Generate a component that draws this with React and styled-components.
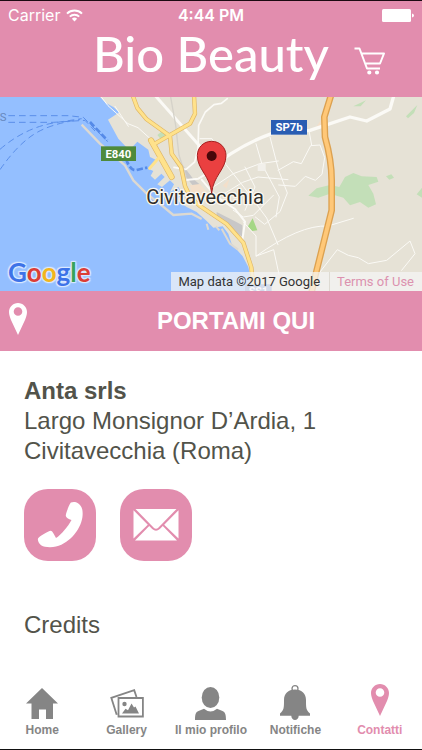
import React from "react";
import styled, { createGlobalStyle } from "styled-components";

const PINK = "#e28dae";
const GREY = "#858585";
const INK = "#52534a";

const GlobalStyle = createGlobalStyle`
  *, *::before, *::after { box-sizing: border-box; }
  body {
    margin: 0;
    background: #fff;
    color: ${INK};
    font-family: "Liberation Sans", Arial, sans-serif;
  }
`;

const Screen = styled.div`
  display: flex;
  flex-direction: column;
  min-height: 100vh;
  border-top: 1px solid #1c0a12;
  border-bottom: 1px solid #111;
`;

const Header = styled.header`
  background: ${PINK};
  color: #fff;
`;

const StatusBar = styled.div`
  display: grid;
  grid-template-columns: 1fr auto 1fr;
  align-items: center;
  height: 28px;
  padding: 0 8px;
  font-family: Inter, sans-serif;
  font-size: 16px;
`;

const Carrier = styled.span`
  display: flex;
  align-items: center;
  gap: 6px;
`;

const Clock = styled.time`
  font-weight: 600;
`;

const BatterySlot = styled.span`
  display: flex;
  justify-content: flex-end;
`;

const TitleRow = styled.div`
  display: grid;
  grid-template-columns: 1fr auto 1fr;
  align-items: center;
  height: 68px;
  padding-bottom: 20px;
`;

const Title = styled.h1`
  grid-column: 2;
  margin: 0;
  font-family: Lato, sans-serif;
  font-size: 49px;
  font-weight: 500;
  line-height: 48px;
  white-space: nowrap;
`;

const CartButton = styled.button`
  justify-self: end;
  display: flex;
  margin: 16px 36px 0 0;
  padding: 0;
  border: 0;
  background: none;
  color: inherit;
`;

const MapArea = styled.section`
  position: relative;
  height: 194px;
  background: #e6e2d6;
  overflow: hidden;
`;

const MapDrawing = styled.svg`
  display: block;
  width: 100%;
  height: 100%;
`;

const GoogleMark = styled.a`
  position: absolute;
  left: 8px;
  bottom: 3px;
  font-family: Lato, sans-serif;
  font-size: 26px;
  font-weight: 700;
  line-height: 32px;
  text-decoration: none;
  text-shadow: 0 0 2px #dbe9ff, 1px 1px 1px #dbe9ff, -1px -1px 1px #dbe9ff, 1px -1px 1px #dbe9ff, -1px 1px 1px #dbe9ff;
`;

const GoogleLetter = styled.span`
  color: ${(p) => p.$color};
`;

const Attribution = styled.div`
  position: absolute;
  right: 0;
  bottom: 0;
  display: flex;
  height: 19px;
  font-family: Roboto, sans-serif;
  font-size: 13px;
  line-height: 20px;
  background: rgba(245, 245, 245, 0.72);
  color: #333;
`;

const MapCredit = styled.span`
  padding: 0 9px 0 7px;
  border-right: 1px solid #dedbd3;
`;

const TermsLink = styled.a`
  padding: 0 8px 0 7px;
  color: #dc92af;
  text-decoration: none;
`;

const DirectionsButton = styled.button`
  display: flex;
  align-items: center;
  width: 100%;
  height: 60px;
  padding: 0;
  border: 0;
  background: ${PINK};
  color: #fff;
  font: bold 24px/28px "Liberation Sans", Arial, sans-serif;
`;

const DirectionsIcon = styled.span`
  display: flex;
  width: 50px;
  padding: 0 0 4px 9px;
`;

const DirectionsLabel = styled.span`
  flex: 1;
  text-align: center;
`;

const Main = styled.main`
  flex: 1;
  padding: 25px 24px;
`;

const Address = styled.address`
  font-style: normal;
  font-size: 24px;
  line-height: 30px;
`;

const Business = styled.strong`
  display: block;
`;

const Line = styled.span`
  display: block;
`;

const Actions = styled.div`
  display: flex;
  gap: 24px;
  margin: 23px 0 48px;
`;

const ActionLink = styled.a`
  display: flex;
  align-items: center;
  justify-content: center;
  width: 72px;
  height: 72px;
  border-radius: 24px;
  background: ${PINK};
  color: #fff;
`;

const CreditsLink = styled.a`
  display: inline-block;
  color: inherit;
  font-size: 24px;
  line-height: 32px;
  text-decoration: none;
`;

const TabBar = styled.nav`
  display: grid;
  grid-template-columns: repeat(5, 1fr);
  padding-bottom: 11px;
`;

const Tab = styled.a`
  display: flex;
  flex-direction: column;
  align-items: center;
  color: ${(p) => (p.$active ? PINK : GREY)};
  font-size: 12px;
  font-weight: bold;
  line-height: 16px;
  text-decoration: none;
  white-space: nowrap;
`;

const TabIcon = styled.span`
  display: flex;
  align-items: ${(p) => (p.$active ? "flex-start" : "flex-end")};
  height: 36px;
  margin-bottom: 2px;
`;

const Pin = () => (
  <svg width="18" height="32" viewBox="0 0 18 32" fill="currentColor" aria-hidden="true">
    <path fillRule="evenodd" d="M9 0C4 0 0 4 0 9c0 3 1 5 2 8l7 15 7-15c1-3 2-5 2-8 0-5-4-9-9-9Zm0 4.2a4.3 4.3 0 1 1 0 8.6 4.3 4.3 0 0 1 0-8.6Z" />
  </svg>
);

const Wifi = () => (
  <svg width="17" height="13" viewBox="0 0 17 13" fill="none" stroke="#fff" strokeWidth="2" aria-hidden="true">
    <path d="M1 4.6a10.8 10.8 0 0 1 15 0M3.8 7.6a6.7 6.7 0 0 1 9.4 0" />
    <path d="M8.5 12.5 5.9 9.8a3.8 3.8 0 0 1 5.2 0Z" fill="#fff" stroke="none" />
  </svg>
);

const Battery = () => (
  <svg width="32" height="13" viewBox="0 0 32 13" fill="#fff" aria-hidden="true">
    <rect width="29" height="13" rx="1.5" />
    <path d="M30 4.5q2 .6 2 2t-2 2Z" />
  </svg>
);

const Cart = () => (
  <svg width="32" height="28" viewBox="0 0 32 28" fill="none" stroke="#fff" strokeWidth="2" strokeLinejoin="round" aria-hidden="true">
    <path d="M.5 1.500H5.500L13 21.500h13M8 6.500h22l-4 10H12" />
    <circle cx="15.300" cy="25.500" r="1.100" fill="#fff" />
    <circle cx="23" cy="25.500" r="1.100" fill="#fff" />
  </svg>
);

const Phone = () => (
  <svg width="46" height="46" viewBox="0 0 46 46" fill="#fff" aria-hidden="true">
    <path d="M34 .6c2-1 5.200-.6 7 .6 3 2 5 5 4.600 12C45 25 34 41 19 44.500 14 45.700 7 45.200 4.500 43.500 2 42 .4 38.500 1 36.600c.5-1.700 11-7.800 12.500-7.800 2 0 3.300 3.500 5.500 7.200C24 33 31 24.500 34.500 18c-3-1.200-6-2.600-5.700-4.600C29 11 32.500 1.500 34 .6Z" />
  </svg>
);

const Envelope = () => (
  <svg width="46" height="32" viewBox="0 0 46 32" fill="#fff" aria-hidden="true">
    <path d="M2.500 0h41L25.500 18.500q-2.500 2.500-5 0ZM.5 1.300l14.300 14.400L.5 29.500ZM45.500 1.300 31.200 15.700 45.500 29.500ZM16.200 17l3 3q3.800 3.400 7.600 0l3-3L44 31.500H2Z" />
  </svg>
);

const HomeIcon = () => (
  <svg width="32" height="32" viewBox="0 0 32 32" fill="currentColor" aria-hidden="true">
    <path d="M16 0 32 15.500h-5V31h-7v-9.500h-7V31H5.500V15.500H0Z" />
  </svg>
);

const GalleryIcon = () => (
  <svg width="34" height="31" viewBox="0 0 34 31" fill="none" stroke="currentColor" strokeWidth="1.800" aria-hidden="true">
    <path d="M26.500 8 24.200 1.200 1.300 8.800l5.400 17M8.500 9h24.400v18.500H8.500Z" />
    <g fill="currentColor" stroke="none">
      <circle cx="14.500" cy="15" r="2.200" />
      <path d="m12 24.500 3.500-4.800 2.500 1.500 3.500-6.700 2.500 4 1.500-1L29 24.500Z" />
    </g>
  </svg>
);

const ProfileIcon = () => (
  <svg width="31" height="33" viewBox="0 0 31 33" fill="currentColor" aria-hidden="true">
    <ellipse cx="15.500" cy="10.500" rx="8.800" ry="10.500" />
    <path d="M0 33c0-6 .8-8 3.500-9L9 21.700q6.500 5.500 13 0l5.500 2.300C30 25 31 27 31 33Z" />
  </svg>
);

const BellIcon = () => (
  <svg width="30" height="35" viewBox="0 0 30 35" fill="currentColor" aria-hidden="true">
    <circle cx="15" cy="3.700" r="3" fill="none" stroke="currentColor" strokeWidth="1.300" />
    <path d="M15 4.500c7 0 11 4.500 11 10.500 0 8 0 10 4 13.500v2.200H18.700C18.700 33 17 35 15 35s-3.700-2-3.700-4.300H0v-2.200C4 25 4 23 4 15 4 9 8 4.500 15 4.500Z" />
  </svg>
);

const TownMap = () => (
  <MapDrawing viewBox="0 0 1266 582" preserveAspectRatio="xMidYMid slice" role="img" aria-label="Map of Civitavecchia">
    <rect width="1266" height="582" fill="#94bfff" />
    <path fill="#e6e2d6" d="M300 0L318 18 340 30 358 46 324 68 355 125 388 160 412 134 445 158 450 180 470 190 445 215 460 222 452 236 465 248 484 230 494 240 472 262 486 270 510 250 522 262 510 285 535 270 548 290 530 310 560 330 590 345 620 372 640 392 668 388 685 410 695 440 728 478 745 510 760 582H1266V0Z" />
    <g fill="none" stroke="#ddd9d1" strokeLinejoin="round">
      <path strokeWidth="7" d="M245 83l55 57 75 65 25 45 40 40 45 35 35 29 55-4 30 16" />
      <path strokeWidth="6" d="M620 380l5 18M648 388l10 12M665 395l25 45 24 18" />
    </g>
    <g fill="#c8c7c7">
      <path d="M520 180l26 22 34 44 24 20-20 6-34-42-28-40ZM650 345l55 28 22 12v34l-22-14-55-48Z" />
      <path fill="#f3dfca" d="M570 265l30-4 32 40-30 18-26-24Z" />
      <path fill="#f3dfca" d="M668 266l20-20-8 28ZM978 44l-34 54 26-6Z" />
    </g>
    <g fill="#c3dfb8">
      <path fill="#a5d785" d="M744 388l14-24 14 36-16 2Z" />
      <path d="M472 114l12-10 14 10-16 12ZM1060 28l38-18-16 18ZM1218 58l34-34-10 24-18 16ZM925 296L950 274 990 264 1018 270 1035 240 1060 228 1085 238 1130 240 1135 254 1105 264 1120 290 1128 322 1105 332 1080 315 1050 325 1030 302 990 290 955 302ZM1158 238l16-6 8 10-14 6ZM1250 292l16-20v30Z" />
    </g>
    <g fill="none" stroke="#5b8fea" strokeWidth="3" strokeDasharray="20 12">
      <path d="M25 56h180l45 5 35 35 38 38" />
      <path d="M25 76h135l95-6 30 32" />
      <path d="M0 157q75-65 165-80l80-12" />
      <path d="M0 218q50-72 100-105t140-45" />
    </g>
    <path d="M270 75l52 55M378 186q14 38 32 33t32-7" fill="none" stroke="#558ae8" strokeWidth="8" strokeDasharray="18 7" />
    <g fill="none" stroke="#fbfaf6" strokeLinejoin="round" strokeLinecap="round">
      <path strokeWidth="9" d="M465-5l132 150 50 60" />
      <path strokeWidth="10" d="M625 220q90-75 190-110l115-10 120-40 50 12 70-36 12-42" />
      <path strokeWidth="5" d="M682 5l-18 14-22 4-26 22-20 40-2 70-10 40-26 22-36-6" />
      <path strokeWidth="3" d="M304 0l20 26 60 54 30 12 40 36M345 28l40 60" />
      <path strokeWidth="3" d="M600 125h36l42 78 54 68 68 92 34 80M640 270l60-40 80-30 55-8M768 140l18 62 52 98-10 60M810 120l26 100 26 68-22 56-46 38-28-22M640 310l88-54 46-16 90 8M735 210l30 60-30 70M834 220l46-26 24 6 28-54 28-2 14 38-8 50-20 18-30-12-30 30-50-4M935 145l-8-45M700 340l30 20 30-5 60-60" />
      <path strokeWidth="6" d="M605 248l40 48 60 40 30 38-8 55M550 250l45-5 50-30" />
      <path strokeWidth="3" d="M769 477q130-94 215-90l76-23M769 477l52-19 16 74M730 375l38 42v60M960 525L1012 458 1045 475 1075 482 1105 500 1160 490 1230 432 1245 470 1205 520" />
    </g>
    <rect x="773" y="200" width="24" height="22" fill="#f2f0eb" />
    <path d="M557 305V235l-20-60-10-90-15-85" fill="none" stroke="#d5d2c9" strokeWidth="4" />
    <g fill="none" strokeLinejoin="round" strokeLinecap="round">
      <path stroke="#e0b765" strokeWidth="13" d="M398-5l14 38 28 34 70 50 5 53 28 40 12 57q14 35 45 60l80 54 50 56 24 74 8 80M582-5l3 55-15 30-105 60" />
      <path stroke="#e0b765" strokeWidth="18" d="M453 130l62 110" />
      <path stroke="#ffe28b" strokeWidth="9" d="M398-5l14 38 28 34 70 50 5 53 28 40 12 57q14 35 45 60l80 54 50 56 24 74 8 80M582-5l3 55-15 30-105 60M449 214l26-30" />
      <path stroke="#ffe28b" strokeWidth="14" d="M453 130l62 110" />
      <path stroke="#dca150" strokeWidth="20" d="M993-5l-20 65 2 60q20 70 20 130v90l-20 80-30 120-10 45" />
      <path stroke="#ffc878" strokeWidth="12" d="M993-5l-20 65 2 60q20 70 20 130v90l-20 80-30 120-10 45" />
    </g>
    <rect x="735" y="562" width="80" height="40" rx="4" fill="#7892cd" />
    <g fontFamily="Roboto, sans-serif" textAnchor="middle">
      <text x="775" y="593" fontSize="32" fontWeight="700" fill="#fff">SS1</text>
      <text x="9" y="71" fontSize="34" fill="#6688bd">S</text>
      <rect x="303" y="148" width="105" height="44" fill="#4e8a3b" />
      <text x="355" y="182" fontSize="34" fontWeight="700" fill="#fff">E840</text>
      <rect x="813" y="69" width="108" height="44" fill="#295db3" />
      <text x="867" y="103" fontSize="34" fontWeight="700" fill="#fff">SP7b</text>
      <text x="615" y="322" fontSize="60" fill="#302e2b" stroke="#faf8f1" strokeWidth="8" strokeLinejoin="round" paintOrder="stroke">Civitavecchia</text>
    </g>
    <path fill="#ea4040" stroke="#a5201f" strokeWidth="3" d="M635 289c-4-52-43-72-43-113 0-25 19-43 43-43s43 18 43 43c0 41-39 61-43 113Z" />
    <circle cx="635" cy="177" r="15" fill="#480709" />
  </MapDrawing>
);

const GOOGLE = [
  ["G", "#3d73e8"],
  ["o", "#dc3d37"],
  ["o", "#f2b51d"],
  ["g", "#3d73e8"],
  ["l", "#36a45a"],
  ["e", "#dc3d37"],
];

const TABS = [
  { label: "Home", Icon: HomeIcon },
  { label: "Gallery", Icon: GalleryIcon },
  { label: "Il mio profilo", Icon: ProfileIcon },
  { label: "Notifiche", Icon: BellIcon },
  { label: "Contatti", Icon: Pin, active: true },
];

export default function App() {
  return (
    <Screen>
      <GlobalStyle />
      <Header>
        <StatusBar>
          <Carrier>Carrier <Wifi /></Carrier>
          <Clock>4:44 PM</Clock>
          <BatterySlot><Battery /></BatterySlot>
        </StatusBar>
        <TitleRow>
          <Title>Bio Beauty</Title>
          <CartButton type="button" aria-label="Cart"><Cart /></CartButton>
        </TitleRow>
      </Header>
      <MapArea>
        <TownMap />
        <GoogleMark href="#google" aria-label="Google">
          {GOOGLE.map(([letter, color], i) => (
            <GoogleLetter key={i} $color={color}>{letter}</GoogleLetter>
          ))}
        </GoogleMark>
        <Attribution>
          <MapCredit>Map data ©2017 Google</MapCredit>
          <TermsLink href="#terms">Terms of Use</TermsLink>
        </Attribution>
      </MapArea>
      <DirectionsButton type="button">
        <DirectionsIcon><Pin /></DirectionsIcon>
        <DirectionsLabel>PORTAMI QUI</DirectionsLabel>
      </DirectionsButton>
      <Main>
        <Address>
          <Business>Anta srls</Business>
          <Line>Largo Monsignor D’Ardia, 1</Line>
          <Line>Civitavecchia (Roma)</Line>
        </Address>
        <Actions>
          <ActionLink href="#call" aria-label="Call"><Phone /></ActionLink>
          <ActionLink href="#email" aria-label="Email"><Envelope /></ActionLink>
        </Actions>
        <CreditsLink href="#credits">Credits</CreditsLink>
      </Main>
      <TabBar>
        {TABS.map(({ label, Icon, active }) => (
          <Tab key={label} href="#tab" $active={active} aria-current={active ? "page" : undefined}>
            <TabIcon $active={active}><Icon /></TabIcon>
            {label}
          </Tab>
        ))}
      </TabBar>
    </Screen>
  );
}
